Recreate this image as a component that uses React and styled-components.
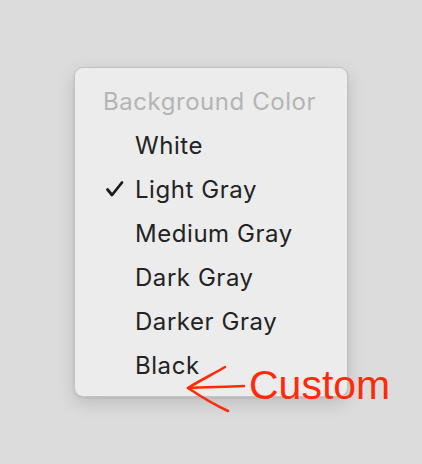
import React from 'react';
import styled, {createGlobalStyle} from 'styled-components';

const GlobalStyle = createGlobalStyle`
	html, body {
		margin: 0;
		padding: 0;
		background: #dcdcdc;
	}
	#root {
		height: 464px;
	}
`;

const Page = styled.div`
	height: 100%;
	display: flex;
	align-items: center;
	justify-content: center;
	font-family: Inter, "Noto Sans", sans-serif;
`;

const Menu = styled.div`
	position: relative;
	width: 274px;
	box-sizing: border-box;
	padding: 11px 0 9px;
	background: #ececec;
	border: 1px solid #c4c4c4;
	border-radius: 9px;
	box-shadow: 0 6px 18px rgba(0, 0, 0, 0.14), 0 1px 3px rgba(0, 0, 0, 0.08);
`;

const Title = styled.div`
	height: 44px;
	display: flex;
	align-items: center;
	padding-left: 28px;
	font-size: 24px;
	letter-spacing: 0.55px;
	color: #b4b4b4;
`;

const Item = styled.div`
	height: 44px;
	display: flex;
	align-items: center;
	padding-left: 60px;
	position: relative;
	font-size: 24px;
	letter-spacing: 0.55px;
	color: #232323;
`;

const Check = styled.svg`
	position: absolute;
	left: 30px;
	top: 13px;
`;

const Note = styled.div`
	position: absolute;
	left: 110px;
	top: 292px;
	display: flex;
	align-items: flex-start;
	color: #ff2a0a;
	font-family: "Liberation Sans", Arial, sans-serif;
	font-size: 41px;
`;

const Arrow = styled.svg`
	margin-top: 5px;
	flex-shrink: 0;
`;

const NoteText = styled.span`
	padding-top: 2px;
`;

const items = ['White', 'Light Gray', 'Medium Gray', 'Dark Gray', 'Darker Gray', 'Black'];

export default function App() {
	return (
		<Page>
			<GlobalStyle />
			<Menu>
				<Title>Background Color</Title>
				{items.map(name => (
					<Item key={name}>
						{name === 'Light Gray' && (
							<Check width="20" height="18" viewBox="0 0 20 18">
								<path d="M2.5 9.5 L7 15 L17 2.5" fill="none" stroke="#1c1c1c" strokeWidth="2.8" strokeLinecap="round" strokeLinejoin="round" />
							</Check>
						)}
						{name}
					</Item>
				))}
				<Note>
					<Arrow width="64" height="50" viewBox="0 0 64 50">
						<path d="M40 2 C30 8 14 16 3 23 C15 31 30 40 43 46" fill="none" stroke="#ff2a0a" strokeWidth="2.6" strokeLinecap="round" strokeLinejoin="round" />
						<path d="M3 23 C20 22 40 22 59 21" fill="none" stroke="#ff2a0a" strokeWidth="2.6" strokeLinecap="round" />
					</Arrow>
					<NoteText>Custom</NoteText>
				</Note>
			</Menu>
		</Page>
	);
}
